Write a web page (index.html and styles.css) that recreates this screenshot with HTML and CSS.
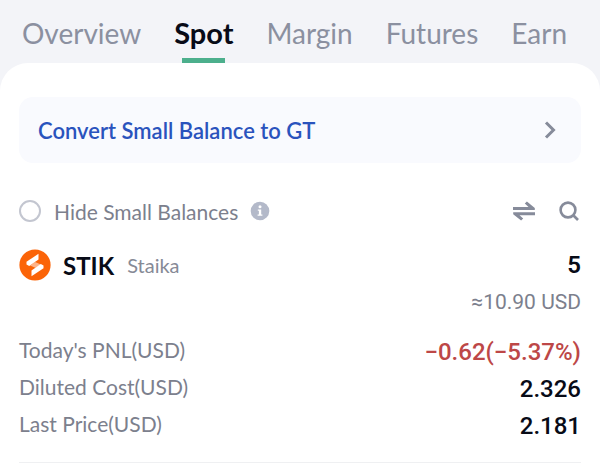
FILE: index.html
```html
<!DOCTYPE html>
<html lang="en">
<head>
<meta charset="utf-8">
<meta name="viewport" content="width=device-width, initial-scale=1">
<title>Spot balances</title>
<link rel="stylesheet" href="styles.css">
</head>
<body>
<nav class="tabs">
  <a class="tab" href="#overview">Overview</a>
  <a class="tab active" href="#spot" aria-current="page">Spot</a>
  <a class="tab" href="#margin">Margin</a>
  <a class="tab" href="#futures">Futures</a>
  <a class="tab" href="#earn">Earn</a>
</nav>
<main class="sheet">
  <a class="convert" href="#convert">
    <span>Convert Small Balance to GT</span>
    <svg width="14" height="20" viewBox="0 0 14 20" fill="none" stroke="#868b9a" stroke-width="3"><path d="M2 2.5 9.5 10 2 17.5"/></svg>
  </a>
  <div class="filter">
    <label class="hide"><input type="checkbox" class="check">Hide Small Balances</label>
    <button class="icon info" type="button" aria-label="About small balances">
      <svg width="20" height="20" viewBox="0 0 20 20"><circle cx="10" cy="10" r="9.3" fill="#b3b9c9"/><circle cx="10" cy="5.7" r="1.5" fill="#fff"/><path d="M7.8 8.4h3.4v5h1.2v1.4H7.6v-1.4h1.3V9.8H7.8z" fill="#fff"/></svg>
    </button>
    <button class="icon swap" type="button" aria-label="Switch view">
      <svg width="24" height="20" viewBox="0 0 24 20" fill="#868b9a"><path d="M1 6h15.500l-3.700-3.600L14.900.600 22.800 7v2H1zM23 14.200H7.500l3.700 3.400-2.100 1.800L1.200 13.200v-2H23z"/></svg>
    </button>
    <button class="icon" type="button" aria-label="Search">
      <svg width="20" height="20" viewBox="0 0 20 20" fill="none" stroke="#868b9a" stroke-width="2.6"><circle cx="9" cy="9" r="7.4"/><path d="M14 14l5 5"/></svg>
    </button>
  </div>
  <section class="asset">
    <div class="coin">
      <svg class="logo" width="32" height="32" viewBox="0 0 32 32"><circle cx="16" cy="16" r="15.6" fill="#fb6408"/><path d="M11 16.500l5-3.500 6 2.500-5 3.500z" fill="#fdb48a"/><path d="M7.500 12.800 19.500 4.800V10.500L10.200 17 7.500 15.500z" fill="#fff"/><path d="M24.500 19.200 12.500 27.200V21.500L21.800 15 24.500 16.500z" fill="#fff"/></svg>
      <h2 class="symbol">STIK</h2>
      <span class="name">Staika</span>
      <strong class="amount">5</strong>
    </div>
    <p class="worth">≈10.90 USD</p>
    <dl class="stats">
      <div class="stat"><dt>Today's PNL(USD)</dt><dd class="loss">−0.62(−5.37%)</dd></div>
      <div class="stat"><dt>Diluted Cost(USD)</dt><dd>2.326</dd></div>
      <div class="stat"><dt>Last Price(USD)</dt><dd>2.181</dd></div>
    </dl>
  </section>
</main>
</body>
</html>
```
FILE: styles.css
```css
* { box-sizing: border-box; }
body {
  margin: 0;
  background: #f3f4f8;
  color: #080b17;
  font-family: Lato, "Liberation Sans", sans-serif;
  font-size: 21px;
}
a { color: inherit; text-decoration: none; }
svg { display: block; }
.tabs {
  display: flex;
  justify-content: space-between;
  padding: 0 33px 0 22px;
}
.tab {
  position: relative;
  height: 63px;
  padding-top: 16px;
  color: #8b90a0;
  font-size: 28px;
  line-height: 34px;
}
.active { color: #080b17; font-size: 29px; font-weight: 700; }
.active::after {
  content: "";
  position: absolute;
  left: 8px;
  right: 8px;
  bottom: 0;
  height: 5px;
  background: #4caf8c;
}
.sheet {
  min-height: calc(100vh - 63px);
  padding: 34px 19px 0;
  border-radius: 28px 28px 0 0;
  background: #fff;
}
.convert {
  display: flex;
  align-items: center;
  justify-content: space-between;
  height: 66px;
  padding: 0 23px 0 19px;
  border-radius: 14px;
  background: #f9fafe;
  color: #2a53bd;
  font-size: 22px;
  font-weight: 600;
}
.filter {
  display: flex;
  align-items: center;
  height: 28px;
  margin-top: 34px;
  padding-right: 2px;
  color: #7c808d;
}
.hide { display: flex; align-items: center; gap: 13px; }
.check {
  appearance: none;
  width: 22px;
  height: 22px;
  margin: 0;
  border: 2px solid #c3c6d0;
  border-radius: 50%;
}
.check:checked { background: #4caf8c; }
.icon { padding: 0; border: 0; background: none; }
.info { margin: 0 auto 0 12px; }
.swap { margin-right: 23px; }
.asset {
  padding: 22px 0 18px;
  border-bottom: 1px solid #eff0f2;
}
.coin { display: flex; align-items: center; height: 36px; }
.symbol { margin: 0 13px 0 12px; font-size: 24px; }
.name { color: #868a96; font-size: 20px; }
.amount, .worth, .stat dd { font-family: Roboto, sans-serif; }
.amount { margin-left: auto; font-size: 24px; font-weight: 600; }
.worth {
  margin: 5px 0 0;
  color: #7c808d;
  font-size: 21px;
  line-height: 28px;
  text-align: right;
}
.stats { margin: 17px 0 0; }
.stat {
  display: flex;
  align-items: center;
  justify-content: space-between;
  height: 37px;
}
.stat dt { padding-bottom: 4px; color: #7c808d; }
.stat dd { margin: 0; font-size: 24px; font-weight: 500; }
.stat .loss { color: #bd4747; }
```
